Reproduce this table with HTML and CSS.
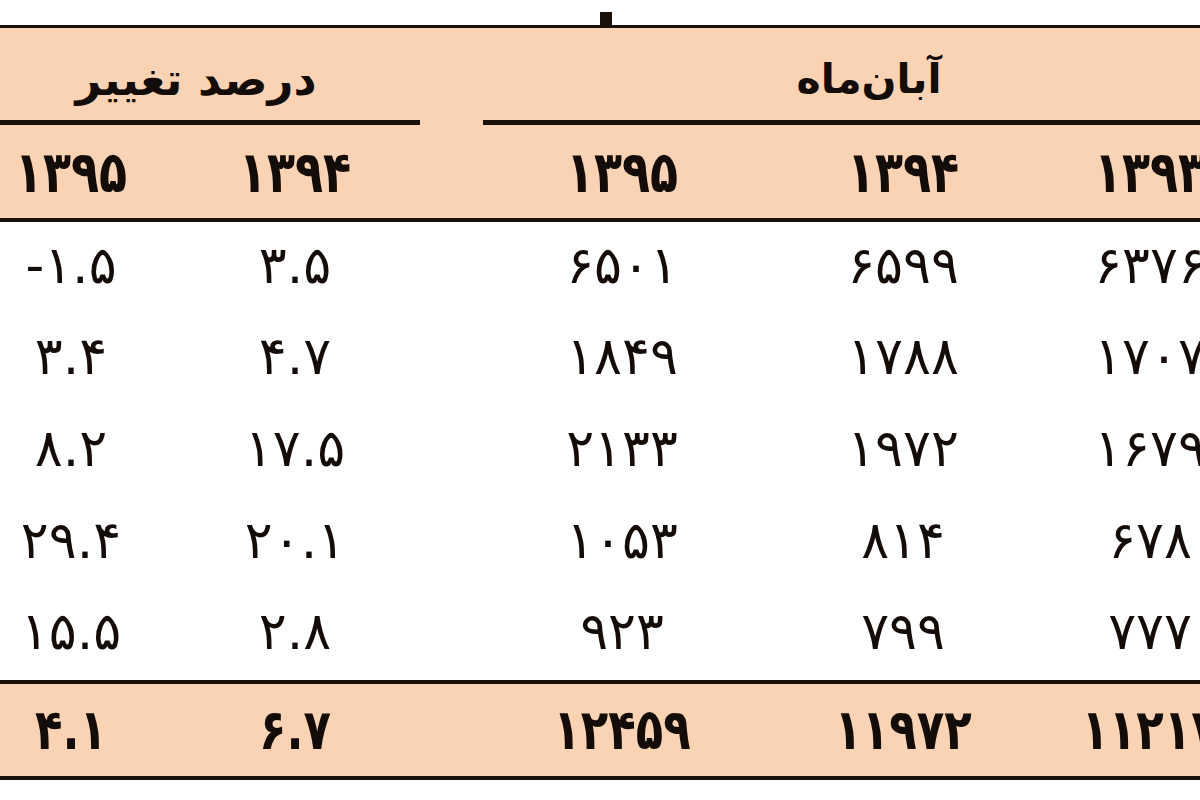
FILE: index.html
```html
<!DOCTYPE html>
<html lang="fa">
<head>
<meta charset="utf-8">
<title>آبان‌ماه</title>
<link rel="stylesheet" href="styles.css">
</head>
<body>
<div class="page">
  <div class="topstrip"><span class="tick"></span></div>
  <table class="stats" dir="rtl">
    <colgroup>
      <col class="col-e">
      <col class="col-d">
      <col class="col-c">
      <col class="col-gap">
      <col class="col-b">
      <col class="col-a">
    </colgroup>
    <thead>
      <tr class="group">
        <th colspan="3" class="grp grp-month">آبان‌ماه</th>
        <th class="gap"></th>
        <th colspan="2" class="grp grp-pct">درصد تغییر</th>
      </tr>
      <tr class="years">
        <th><span class="n">۱۳۹۳</span></th>
        <th><span class="n">۱۳۹۴</span></th>
        <th><span class="n">۱۳۹۵</span></th>
        <th class="gap"></th>
        <th><span class="n">۱۳۹۴</span></th>
        <th><span class="n">۱۳۹۵</span></th>
      </tr>
    </thead>
    <tbody>
      <tr><td>۶۳۷۶</td><td>۶۵۹۹</td><td>۶۵۰۱</td><td class="gap"></td><td>۳.۵</td><td>-۱.۵</td></tr>
      <tr><td>۱۷۰۷</td><td>۱۷۸۸</td><td>۱۸۴۹</td><td class="gap"></td><td>۴.۷</td><td>۳.۴</td></tr>
      <tr><td>۱۶۷۹</td><td>۱۹۷۲</td><td>۲۱۳۳</td><td class="gap"></td><td>۱۷.۵</td><td>۸.۲</td></tr>
      <tr><td>۶۷۸</td><td>۸۱۴</td><td>۱۰۵۳</td><td class="gap"></td><td>۲۰.۱</td><td>۲۹.۴</td></tr>
      <tr><td>۷۷۷</td><td>۷۹۹</td><td>۹۲۳</td><td class="gap"></td><td>۲.۸</td><td>۱۵.۵</td></tr>
    </tbody>
    <tfoot>
      <tr>
        <td><span class="n">۱۱۲۱۷</span></td>
        <td><span class="n">۱۱۹۷۲</span></td>
        <td><span class="n">۱۲۴۵۹</span></td>
        <td class="gap"></td>
        <td><span class="n">۶.۷</span></td>
        <td><span class="n">۴.۱</span></td>
      </tr>
    </tfoot>
  </table>
</div>
</body>
</html>
```

FILE: styles.css
```css
html, body {
  margin: 0;
  padding: 0;
  background: #ffffff;
}

body {
  width: 1200px;
  height: 800px;
  overflow: hidden;
  font-family: "DejaVu Sans", sans-serif;
  color: #140c08;
}

.page {
  width: 1200px;
  overflow: hidden;
}

.topstrip {
  height: 25px;
  display: flex;
  align-items: flex-end;
  padding-left: 600px;
}

.tick {
  display: block;
  width: 12px;
  height: 13px;
  background: #1a100a;
}

.stats {
  border-collapse: separate;
  border-spacing: 0;
  table-layout: fixed;
  width: 1283px;
  margin-left: -28px;
  border-top: 3px solid #1a100a;
  background: #ffffff;
}

.col-e { width: 210px; }
.col-d { width: 284px; }
.col-c { width: 278px; }
.col-gap { width: 63px; }
.col-b { width: 250px; }
.col-a { width: 198px; }

.stats th,
.stats td {
  padding: 0;
  text-align: center;
  vertical-align: middle;
  box-sizing: border-box;
  white-space: nowrap;
}

.stats thead th {
  background: #f9d3b4;
}

.n {
  display: inline-block;
  transform: scaleY(1.25);
}

.group th {
  height: 97px;
  font-weight: bold;
  padding-top: 9px;
  border-bottom: 5px solid #1a100a;
}

.group th.grp-month {
  font-size: 41px;
}

.group th.grp-pct {
  font-size: 45px;
  padding-top: 10px;
}

.group th.gap {
  border-bottom-color: transparent;
}

.years th {
  height: 97px;
  font-size: 46px;
  font-weight: bold;
  letter-spacing: -2px;
  border-bottom: 4px solid #1a100a;
}

.stats tbody td {
  height: 91.6px;
  font-size: 52px;
  letter-spacing: -2px;
  direction: ltr;
  padding-bottom: 6px;
}

.stats tfoot td {
  height: 100px;
  background: #f9d3b4;
  font-size: 45px;
  font-weight: bold;
  letter-spacing: -3px;
  direction: ltr;
  border-top: 4px solid #1a100a;
  border-bottom: 4px solid #1a100a;
}
```
